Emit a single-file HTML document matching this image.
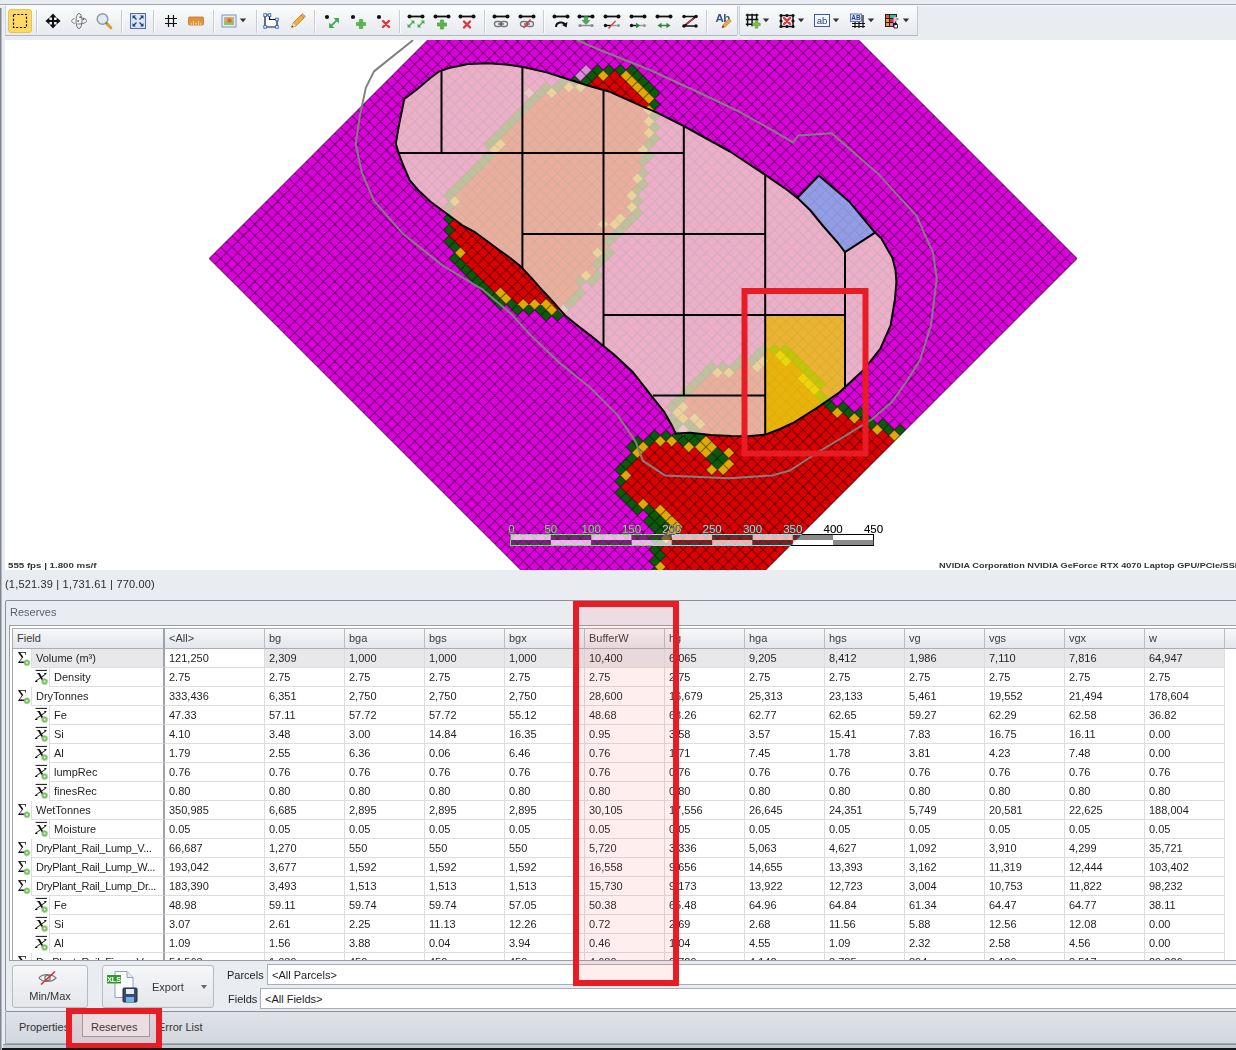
<!DOCTYPE html>
<html><head><meta charset="utf-8"><title>Reserves</title>
<style>
html,body{margin:0;padding:0;}
body{width:1236px;height:1050px;overflow:hidden;background:#e9ecf1;font-family:"Liberation Sans",sans-serif;font-size:11px;color:#1e1e1e;}
#root{position:relative;width:1236px;height:1050px;overflow:hidden;background:#e9ecf1;}
.abs{position:absolute;}
#topline{position:absolute;left:0;top:4px;width:1236px;height:1px;background:#a4a8b0;}
#topline2{position:absolute;left:0;top:5px;width:1236px;height:1px;background:#f4f6f9;}
#leftedge{position:absolute;left:0;top:8px;width:1px;height:1042px;background:#80848c;}
#leftedge2{position:absolute;left:1px;top:8px;width:1px;height:1042px;background:#b4b8c0;}
#tb{position:absolute;left:5px;top:6px;width:911px;height:29px;background:linear-gradient(#fbfcfd,#e6e9ee);border-bottom:1px solid #b4b8c0;border-right:1px solid #c4c8d0;border-left:1px solid #d0d3da;box-sizing:content-box;}
#tb svg{position:absolute;left:-6px;top:-6px;}
#coords{position:absolute;left:5px;top:578px;font-size:11px;color:#2a2a2a;letter-spacing:0.18px;}
#grp{position:absolute;left:5px;top:600px;width:1240px;height:412px;border:1px solid #8c9097;border-radius:2px;box-sizing:border-box;background:#e9ecf1;}
#grptitle{position:absolute;left:10px;top:606px;color:#5a5f6b;font-size:11px;}
#gridbox{position:absolute;left:9px;top:625px;width:1240px;height:336px;border:1px solid #9a9ea6;background:#fff;box-sizing:border-box;}
#grid{position:absolute;left:12px;top:628px;width:1224px;height:332px;overflow:hidden;background:#fff;border-top:1px solid #a8acb4;border-left:1px solid #a8acb4;box-sizing:border-box;}
.hd{position:absolute;top:0;height:20px;background:linear-gradient(#f7f8fa,#e3e6eb);border-right:1px solid #b9bdc5;border-bottom:1px solid #a9adb5;box-sizing:border-box;color:#3a3a3a;padding:3px 0 0 4px;white-space:nowrap;}
.c{position:absolute;height:19px;border-right:1px solid #dcdde0;border-bottom:1px solid #dcdde0;box-sizing:border-box;padding:3px 0 0 4px;white-space:nowrap;overflow:hidden;}
.sel{background:#e8e8eb;}
.ico{position:absolute;}
#bottomdark{position:absolute;left:0;top:1048px;width:1236px;height:2px;background:#161616;}
.btn{position:absolute;border:1px solid #b7bac1;border-radius:3px;background:linear-gradient(#f6f7f9,#e4e6ea);box-sizing:border-box;}
.inp{position:absolute;height:21px;border:1px solid #a9adb5;background:#fff;box-sizing:border-box;padding:3px 0 0 4px;white-space:nowrap;}
.tab{position:absolute;top:1021px;color:#333;}

</style></head><body>
<div id="root">
<div id="tb"><svg width="930" height="40" viewBox="0 0 930 40"><path d="M36.5 10V33" stroke="#c9ccd3" stroke-width="1"/><path d="M37.5 10V33" stroke="#fbfcfd" stroke-width="1"/><path d="M121.5 10V33" stroke="#c9ccd3" stroke-width="1"/><path d="M122.5 10V33" stroke="#fbfcfd" stroke-width="1"/><path d="M153.5 10V33" stroke="#c9ccd3" stroke-width="1"/><path d="M154.5 10V33" stroke="#fbfcfd" stroke-width="1"/><path d="M213.5 10V33" stroke="#c9ccd3" stroke-width="1"/><path d="M214.5 10V33" stroke="#fbfcfd" stroke-width="1"/><path d="M256.5 10V33" stroke="#c9ccd3" stroke-width="1"/><path d="M257.5 10V33" stroke="#fbfcfd" stroke-width="1"/><path d="M314.5 10V33" stroke="#c9ccd3" stroke-width="1"/><path d="M315.5 10V33" stroke="#fbfcfd" stroke-width="1"/><path d="M399.5 10V33" stroke="#c9ccd3" stroke-width="1"/><path d="M400.5 10V33" stroke="#fbfcfd" stroke-width="1"/><path d="M484.5 10V33" stroke="#c9ccd3" stroke-width="1"/><path d="M485.5 10V33" stroke="#fbfcfd" stroke-width="1"/><path d="M543.5 10V33" stroke="#c9ccd3" stroke-width="1"/><path d="M544.5 10V33" stroke="#fbfcfd" stroke-width="1"/><path d="M706.5 10V33" stroke="#c9ccd3" stroke-width="1"/><path d="M707.5 10V33" stroke="#fbfcfd" stroke-width="1"/><rect x="737" y="6" width="3" height="30" fill="#e9ecf1"/><path d="M737.5 6V35" stroke="#c4c8d0"/><path d="M739.5 6V35" stroke="#d0d3da"/><rect x="8.5" y="9.5" width="23" height="23" rx="2.5" fill="#ffd966" stroke="#e3c263"/><rect x="13.5" y="14.5" width="13" height="13" fill="none" stroke="#111" stroke-width="1.2" stroke-dasharray="2.2 1.6"/><g transform="translate(53,21)" fill="#111"><path d="M-5 0H5M0 -5V5" stroke="#111" stroke-width="2"/><path d="M0 -7.6L-3.6 -3.6H3.6ZM0 7.6L-3.6 3.6H3.6ZM-7.6 0L-3.6 -3.6V3.6ZM7.6 0L3.6 -3.6V3.6Z"/></g><g transform="translate(79,21)" fill="none" stroke="#666" stroke-width="0.9"><ellipse cx="0" cy="0" rx="3" ry="7.6"/><path d="M-4.6 -2.6C-8.6 -1.2 -8 1.8 -4.2 2.4M-1.6 3C3.5 3.2 8 1.6 7.6 -0.4C7.3 -1.8 5.4 -2.6 3.6 -2.9"/><path d="M1.2 -4.6V-3M0.4 -3.8H2M4.4 -2.6V-1M3.6 -1.8H5.2M-0.8 -0.8V0.8M-1.6 0H0" stroke="#444" stroke-width="0.8"/></g><g transform="translate(104,21)"><circle cx="-1.5" cy="-2" r="5.3" fill="#dfeaf6" stroke="#8d99a8" stroke-width="1.5"/><path d="M2.8 2.6L6.8 6.8" stroke="#e0a030" stroke-width="3" stroke-linecap="round"/><path d="M1.6 1.4L3 2.8" stroke="#777" stroke-width="1.8"/></g><g transform="translate(138,21)"><rect x="-7.5" y="-7.5" width="15" height="15" fill="#dbe6f5" stroke="#4a6ea8" stroke-width="1"/><path d="M-5.5 -5.5H-2L-5.5 -2ZM5.5 -5.5H2L5.5 -2ZM-5.5 5.5H-2L-5.5 2ZM5.5 5.5H2L5.5 2Z" fill="#1f3f7a"/><path d="M-4.5 -4.5L-1.5 -1.5M4.5 -4.5L1.5 -1.5M-4.5 4.5L-1.5 1.5M4.5 4.5L1.5 1.5" stroke="#1f3f7a" stroke-width="1.3"/></g><g transform="translate(171,21)" stroke="#111" stroke-width="1.2"><path d="M-2.5 -6V6M2.5 -6V6M-6 -2.5H6M-6 2.5H6"/></g><g transform="translate(196,21)"><rect x="-7.5" y="-4" width="15" height="8" rx="1" fill="#e2913a" stroke="#c9772a" stroke-width="0.8"/><path d="M-5 4V1.5M-2.5 4V0M0 4V1.5M2.5 4V0M5 4V1.5" stroke="#f7dcc0" stroke-width="0.9"/></g><g transform="translate(229,21)"><rect x="-7" y="-6" width="14" height="12" fill="#e9eef6" stroke="#7a93c2" stroke-width="1"/><rect x="-5" y="-4" width="10" height="8" fill="#8fc46a"/><rect x="-5" y="-4" width="10" height="4" fill="#c9b07a"/><circle cx="0.5" cy="-0.5" r="2.2" fill="#e0662a"/></g><path d="M239.8 18.6H246.2L243 22.2Z" fill="#333"/><g transform="translate(271,21)"><path d="M-6 -6H-1.5V-1.5H6V6H-6Z" fill="#fff" stroke="#111" stroke-width="1.2"/><g fill="#fff" stroke="#2a5fd0" stroke-width="0.9"><rect x="-7.2" y="-7.2" width="2.6" height="2.6"/><rect x="-2.8" y="-7.2" width="2.6" height="2.6"/><rect x="4.6" y="-2.8" width="2.6" height="2.6"/><rect x="4.6" y="4.6" width="2.6" height="2.6"/><rect x="-7.2" y="4.6" width="2.6" height="2.6"/></g></g><g transform="translate(298,21)"><path d="M-6.5 6.5L-5 2L3 -6L6 -3L-2 5Z" fill="#f0b040" stroke="#b8801e" stroke-width="0.8"/><path d="M3 -6L4.5 -7.5L7.5 -4.5L6 -3Z" fill="#e8a0a0" stroke="#b8801e" stroke-width="0.6"/><path d="M-6.5 6.5L-5 2L-2 5Z" fill="#f7e2c0"/><path d="M-6.5 6.5L-5.8 4.4L-4.4 5.8Z" fill="#333"/></g><circle cx="327" cy="17" r="2.1" fill="#111"/><g transform="translate(334,23) scale(0.9)" fill="#45ab52" stroke="#45ab52"><path d="M-3.5 3.5L3.5 -3.5" stroke-width="2.2"/><path d="M5.5 -5.5H-0.5L5.5 0.5Z" stroke="none"/><path d="M-5.5 5.5H0.5L-5.5 -0.5Z" stroke="none"/></g><circle cx="353" cy="17" r="2.1" fill="#111"/><g transform="translate(361,24)"><path d="M-1.6 -4.5H1.6V-1.6H4.5V1.6H1.6V4.5H-1.6V1.6H-4.5V-1.6H-1.6Z" fill="#5cb548" stroke="#3f9a30" stroke-width="0.6"/></g><circle cx="379" cy="17" r="2.1" fill="#111"/><g transform="translate(386,24)" stroke="#e0363a" stroke-width="2.4" stroke-linecap="round"><path d="M-3 -3L3 3M3 -3L-3 3"/></g><path d="M409.5 16.5H422.5" stroke="#111" stroke-width="1.8"/><circle cx="409.5" cy="16.5" r="2" fill="#111"/><circle cx="422.5" cy="16.5" r="2" fill="#111"/><g transform="translate(411,24) scale(0.62)" fill="#45ab52" stroke="#45ab52"><path d="M-3.5 3.5L3.5 -3.5" stroke-width="2.2"/><path d="M5.5 -5.5H-0.5L5.5 0.5Z" stroke="none"/><path d="M-5.5 5.5H0.5L-5.5 -0.5Z" stroke="none"/></g><g transform="translate(421,24) scale(0.62)" fill="#45ab52" stroke="#45ab52"><path d="M-3.5 3.5L3.5 -3.5" stroke-width="2.2"/><path d="M5.5 -5.5H-0.5L5.5 0.5Z" stroke="none"/><path d="M-5.5 5.5H0.5L-5.5 -0.5Z" stroke="none"/></g><path d="M435.5 16.5H448.5" stroke="#111" stroke-width="1.8"/><circle cx="435.5" cy="16.5" r="2" fill="#111"/><circle cx="448.5" cy="16.5" r="2" fill="#111"/><g transform="translate(442,24.5)"><path d="M-1.6 -4.5H1.6V-1.6H4.5V1.6H1.6V4.5H-1.6V1.6H-4.5V-1.6H-1.6Z" fill="#5cb548" stroke="#3f9a30" stroke-width="0.6"/></g><path d="M460.5 16.5H473.5" stroke="#111" stroke-width="1.8"/><circle cx="460.5" cy="16.5" r="2" fill="#111"/><circle cx="473.5" cy="16.5" r="2" fill="#111"/><g transform="translate(467,24.5)" stroke="#e0363a" stroke-width="2.4" stroke-linecap="round"><path d="M-3 -3L3 3M3 -3L-3 3"/></g><path d="M494.5 16.5H507.5" stroke="#111" stroke-width="1.8"/><circle cx="494.5" cy="16.5" r="2" fill="#111"/><circle cx="507.5" cy="16.5" r="2" fill="#111"/><g fill="none" stroke="#777" stroke-width="1.3"><rect x="494.5" y="21.5" width="7" height="5" rx="2.5"/><rect x="500.5" y="21.5" width="7" height="5" rx="2.5"/></g><path d="M498 24H504" stroke="#555" stroke-width="1.2"/><path d="M520.5 16.5H533.5" stroke="#111" stroke-width="1.8"/><circle cx="520.5" cy="16.5" r="2" fill="#111"/><circle cx="533.5" cy="16.5" r="2" fill="#111"/><g fill="none" stroke="#777" stroke-width="1.3"><rect x="520.5" y="21.5" width="7" height="5" rx="2.5"/><rect x="526.5" y="21.5" width="7" height="5" rx="2.5"/></g><path d="M524 24H530" stroke="#555" stroke-width="1.2"/><path d="M523.5 28L530.5 19.5" stroke="#e0363a" stroke-width="1.3"/><path d="M554.5 16.5H567.5" stroke="#111" stroke-width="1.8"/><circle cx="554.5" cy="16.5" r="2" fill="#111"/><circle cx="567.5" cy="16.5" r="2" fill="#111"/><path d="M556 27C556 22 563 21 565.5 24.5" fill="none" stroke="#111" stroke-width="2"/><path d="M567.5 22L566.5 27.5L562 25Z" fill="#111"/><path d="M579.5 16.5H592.5" stroke="#111" stroke-width="1.8"/><circle cx="579.5" cy="16.5" r="2" fill="#111"/><circle cx="592.5" cy="16.5" r="2" fill="#111"/><path d="M584.3 16.5H587.7V20.5H590L586 24.5L582 20.5H584.3Z" fill="#45ab52" stroke="#2e8a3a" stroke-width="0.5"/><path d="M580 25.5H592" stroke="#888" stroke-width="1.4"/><circle cx="580" cy="25.5" r="1.6" fill="#888"/><circle cx="592" cy="25.5" r="1.6" fill="#888"/><path d="M605.5 16.5H618.5" stroke="#111" stroke-width="1.8"/><circle cx="605.5" cy="16.5" r="2" fill="#111"/><circle cx="618.5" cy="16.5" r="2" fill="#111"/><path d="M605.5 25.5H611" stroke="#111" stroke-width="1.4"/><circle cx="605.5" cy="25.5" r="1.7" fill="#111"/><path d="M612 25.5H618" stroke="#999" stroke-width="1.4"/><circle cx="618.5" cy="25.5" r="1.6" fill="#999"/><path d="M608.5 28.5L615.5 21" stroke="#e0363a" stroke-width="1.3"/><path d="M631.5 16.5H644.5" stroke="#111" stroke-width="1.8"/><circle cx="631.5" cy="16.5" r="2" fill="#111"/><circle cx="644.5" cy="16.5" r="2" fill="#111"/><path d="M631.5 25.5H638" stroke="#111" stroke-width="1.4"/><circle cx="631.5" cy="25.5" r="1.7" fill="#111"/><path d="M636 22.8L640.5 25.5L636 28.2Z" fill="#2e8a3a"/><path d="M640 25.5H644" stroke="#999" stroke-width="1.4"/><circle cx="644.5" cy="25.5" r="1.6" fill="#999"/><path d="M657.5 16.5H670.5" stroke="#111" stroke-width="1.8"/><circle cx="657.5" cy="16.5" r="2" fill="#111"/><circle cx="670.5" cy="16.5" r="2" fill="#111"/><path d="M660 25.5H668" stroke="#2e8a3a" stroke-width="1.5"/><path d="M657.5 25.5L661.5 22.8V28.2ZM670.5 25.5L666.5 22.8V28.2Z" fill="#2e8a3a"/><path d="M684 16.5H696L684 26H696" fill="none" stroke="#111" stroke-width="1.6"/><circle cx="684" cy="16.5" r="1.7" fill="#111"/><circle cx="696" cy="16.5" r="1.7" fill="#111"/><circle cx="684" cy="26" r="1.7" fill="#111"/><circle cx="696" cy="26" r="1.7" fill="#111"/><path d="M686 24L694 18.5" stroke="#e0363a" stroke-width="1.3"/><text x="715.5" y="22" font-family="Liberation Sans, sans-serif" font-size="11.5" font-weight="bold" fill="#354f8c" letter-spacing="-0.6">Ab</text><path d="M722 27.8L723.2 24.6L729 18.8L731.2 21L725.4 26.8Z" fill="#f0a838" stroke="#b8801e" stroke-width="0.7"/><path d="M722 27.8L722.8 25.6L724.2 27Z" fill="#223"/><g stroke="#111" stroke-width="1.5"><path d="M747.6 13.8V26.2M752.1 13.8V26.2M756.6 13.8V24M745.8 15H758.4M745.8 19.5H758.4M745.8 24.2H756"/></g><g transform="translate(756.5,24.3) scale(0.85)"><path d="M-1.6 -4.5H1.6V-1.6H4.5V1.6H1.6V4.5H-1.6V1.6H-4.5V-1.6H-1.6Z" fill="#76bd45" stroke="#5aa532" stroke-width="0.6"/></g><path d="M762.8 18.6H769.2L766 22.2Z" fill="#333"/><g transform="translate(787,21)"><rect x="-6" y="-5.5" width="12" height="11" fill="none" stroke="#111" stroke-width="1.4"/><g fill="#111"><circle cx="-6" cy="-5.5" r="1.6"/><circle cx="0" cy="-5.5" r="1.6"/><circle cx="6" cy="-5.5" r="1.6"/><circle cx="-6" cy="0" r="1.6"/><circle cx="6" cy="0" r="1.6"/><circle cx="-6" cy="5.5" r="1.6"/><circle cx="0" cy="5.5" r="1.6"/><circle cx="6" cy="5.5" r="1.6"/></g></g><g transform="translate(787,21)" stroke="#e0363a" stroke-width="2.4" stroke-linecap="round"><path d="M-3 -3L3 3M3 -3L-3 3"/></g><path d="M797.8 18.6H804.2L801 22.2Z" fill="#333"/><rect x="814.5" y="14.5" width="15" height="12" fill="#f4f7fc" stroke="#3a5aa8" stroke-width="1"/><text x="822" y="24" font-family="Liberation Sans, sans-serif" font-size="9.5" fill="#1f3f8a" text-anchor="middle">ab</text><path d="M832.8 18.6H839.2L836 22.2Z" fill="#333"/><rect x="850.5" y="14" width="11" height="7.5" fill="#dfe8f6" stroke="#3a5aa8" stroke-width="0.8"/><text x="856" y="20.3" font-family="Liberation Sans, sans-serif" font-size="6.5" font-weight="bold" fill="#1f3f8a" text-anchor="middle">AB</text><g stroke="#111" stroke-width="1.2"><path d="M855 22V28M859 22V28M863 15V28M852 23.5H865M852 26.5H865"/></g><path d="M867.8 18.6H874.2L871 22.2Z" fill="#333"/><g><rect x="885" y="14" width="12" height="13" fill="#222"/><rect x="886" y="15" width="3" height="3" fill="#f05050"/><rect x="890" y="15" width="6" height="3" fill="#30c0a0"/><rect x="886" y="19" width="3" height="3" fill="#f0a030"/><rect x="890" y="19" width="6" height="3" fill="#e03030"/><rect x="886" y="23" width="3" height="3" fill="#f0a030"/><rect x="890" y="23" width="3" height="3" fill="#e080e0"/><rect x="893.5" y="17" width="3.5" height="6" fill="#f0b0e0"/><path d="M895.5 21.5V24.5M894 24.5H897.5V28H894Z" fill="#fff" stroke="#111" stroke-width="0.9"/><circle cx="897.5" cy="19" r="1" fill="#30b030"/></g><path d="M902.8 18.6H909.2L906 22.2Z" fill="#333"/></svg></div>
<svg id="map" width="1231" height="530" viewBox="5 40 1231 530" style="position:absolute;left:5px;top:40px;background:#fff">
<defs><mask id="pm" maskUnits="userSpaceOnUse" x="0" y="0" width="1236" height="600"><polygon points="395.8,143.8 398.8,125.9 404.3,99 416.8,89.5 430,78.2 438.7,71.6 448.9,68 467.9,64.1 488.3,63.2 505.7,64.4 523.2,67 546.5,72.4 569.8,79.7 590.2,86.2 610,91.8 640,105.4 657,112.7 683.8,126 730,151.5 765,174.6 785,188.3 797.4,197.9 797.4,197.9 818.8,175.5 849.8,202.1 875,232.6 881.2,238.3 892.5,258 895.5,270 896.4,282 895,299 890.6,325.3 880.4,348.6 863,370.5 839.6,392.3 816.3,408.4 793,423 780,429 765.4,434.6 748,436.3 731,436.1 710.7,435 690.3,432.8 675.7,433.5 671.4,424.8 664,411.6 654.6,400 632.8,372 613.4,354.1 601.8,344.7 590.9,335.9 577.8,325.7 566.1,316.3 558.8,308.3 553,301.7 542.8,290.8 531.2,277.7 520.2,266 509.3,257.3 499.1,250 475,232.2 462.3,225.3 446.8,213.8 430.6,201.8 418.5,190.5 409.8,180.4 403.5,166 398.8,153.5" fill="#fff"/><polygon points="765.4,315.1 844.6,315.1 844.6,389 839.6,392.3 816.3,408.4 793,423 780,429 765.4,434.6" fill="#000"/><polygon points="797.4,197.9 818.8,175.5 849.8,202.1 875,232.6 845,252.1 838,243 823.1,226 810,210" fill="#000"/></mask></defs>
<g transform="matrix(5.71,5.71,5.71,-5.71,209.2,258.5)">
<rect x="0" y="0" width="76" height="76" fill="#dc00dc"/>
<path fill="#dc0000" d="M75 3h1v1h-1zM74 4h2v1h-2zM73 5h3v1h-3zM72 6h4v1h-4zM71 7h5v1h-5zM70 8h6v1h-6zM69 9h7v1h-7zM68 10h8v1h-8zM67 11h9v1h-9zM67 12h9v1h-9zM66 13h10v1h-10zM65 14h11v1h-11zM65 15h11v1h-11zM56 16h3v1h-3zM65 16h11v1h-11zM56 17h5v1h-5zM65 17h11v1h-11zM55 18h21v1h-21zM55 19h21v1h-21zM55 20h21v1h-21zM55 21h21v1h-21zM22 22h6v1h-6zM55 22h21v1h-21zM19 23h12v1h-12zM56 23h20v1h-20zM18 24h14v1h-14zM57 24h19v1h-19zM17 25h16v1h-16zM59 25h3v1h-3zM63 25h13v1h-13zM17 26h18v1h-18zM64 26h12v1h-12zM16 27h19v1h-19zM64 27h12v1h-12zM16 28h19v1h-19zM55 28h1v1h-1zM58 28h4v1h-4zM63 28h13v1h-13zM16 29h19v1h-19zM54 29h22v1h-22zM16 30h18v1h-18zM54 30h22v1h-22zM16 31h18v1h-18zM54 31h22v1h-22zM16 32h19v1h-19zM54 32h22v1h-22zM16 33h18v1h-18zM54 33h22v1h-22zM16 34h17v1h-17zM55 34h21v1h-21zM16 35h18v1h-18zM56 35h20v1h-20zM15 36h18v1h-18zM56 36h20v1h-20zM15 37h16v1h-16zM32 37h1v1h-1zM56 37h20v1h-20zM15 38h17v1h-17zM58 38h18v1h-18zM15 39h17v1h-17zM58 39h18v1h-18zM15 40h18v1h-18zM57 40h19v1h-19zM15 41h17v1h-17zM60 41h2v1h-2zM69 41h7v1h-7zM15 42h16v1h-16zM71 42h5v1h-5zM15 43h16v1h-16zM74 43h2v1h-2zM16 44h14v1h-14zM16 45h14v1h-14zM17 46h12v1h-12zM18 47h10v1h-10zM18 48h10v1h-10zM18 49h9v1h-9zM19 50h7v1h-7zM19 51h6v1h-6z"/>
<path fill="#0a5a0a" d="M75 2h1v1h-1zM74 3h1v1h-1zM73 4h1v1h-1zM72 5h1v1h-1zM71 6h1v1h-1zM70 7h1v1h-1zM69 8h1v1h-1zM68 9h1v1h-1zM67 10h1v1h-1zM66 11h1v1h-1zM65 12h1v1h-1zM64 13h2v1h-2zM63 14h2v1h-2zM56 15h4v1h-4zM61 15h3v1h-3zM55 16h1v1h-1zM60 16h4v1h-4zM54 17h1v1h-1zM54 18h1v1h-1zM54 19h1v1h-1zM53 20h1v1h-1zM21 21h9v1h-9zM53 21h1v1h-1zM19 22h2v1h-2zM30 22h2v1h-2zM54 22h1v1h-1zM18 23h1v1h-1zM32 23h1v1h-1zM54 23h1v1h-1zM17 24h1v1h-1zM33 24h2v1h-2zM55 24h1v1h-1zM16 25h1v1h-1zM35 25h1v1h-1zM56 25h2v1h-2zM15 26h1v1h-1zM54 26h2v1h-2zM57 26h2v1h-2zM61 26h2v1h-2zM15 27h1v1h-1zM35 27h1v1h-1zM53 27h1v1h-1zM56 27h3v1h-3zM61 27h2v1h-2zM15 28h1v1h-1zM35 28h1v1h-1zM53 28h1v1h-1zM15 29h1v1h-1zM35 29h1v1h-1zM53 29h1v1h-1zM15 30h1v1h-1zM34 30h1v1h-1zM53 30h1v1h-1zM15 31h1v1h-1zM35 31h1v1h-1zM53 31h1v1h-1zM15 32h1v1h-1zM35 32h1v1h-1zM53 32h1v1h-1zM15 33h1v1h-1zM34 33h1v1h-1zM53 33h1v1h-1zM14 34h1v1h-1zM34 34h1v1h-1zM53 34h1v1h-1zM14 35h1v1h-1zM34 35h1v1h-1zM54 35h1v1h-1zM14 36h1v1h-1zM33 36h1v1h-1zM55 36h1v1h-1zM14 37h1v1h-1zM33 37h1v1h-1zM55 37h1v1h-1zM14 38h1v1h-1zM33 38h1v1h-1zM56 38h1v1h-1zM14 39h1v1h-1zM33 39h1v1h-1zM56 39h1v1h-1zM14 40h1v1h-1zM33 40h1v1h-1zM56 40h1v1h-1zM14 41h1v1h-1zM33 41h1v1h-1zM57 41h1v1h-1zM65 41h3v1h-3zM14 42h1v1h-1zM32 42h1v1h-1zM58 42h7v1h-7zM68 42h2v1h-2zM14 43h1v1h-1zM31 43h1v1h-1zM70 43h3v1h-3zM14 44h1v1h-1zM31 44h1v1h-1zM73 44h2v1h-2zM15 45h1v1h-1zM30 45h1v1h-1zM75 45h1v1h-1zM15 46h1v1h-1zM29 46h1v1h-1zM16 47h1v1h-1zM29 47h1v1h-1zM17 48h1v1h-1zM28 48h1v1h-1zM17 49h1v1h-1zM28 49h1v1h-1zM17 50h1v1h-1zM27 50h1v1h-1zM18 51h1v1h-1zM26 51h1v1h-1zM19 52h1v1h-1zM25 52h1v1h-1zM20 53h5v1h-5z"/>
<path fill="#e1aa00" d="M66 12h1v1h-1zM64 15h1v1h-1zM59 16h1v1h-1zM64 16h1v1h-1zM55 17h1v1h-1zM61 17h4v1h-4zM54 20h1v1h-1zM54 21h1v1h-1zM21 22h1v1h-1zM28 22h2v1h-2zM31 23h1v1h-1zM55 23h1v1h-1zM32 24h1v1h-1zM56 24h1v1h-1zM33 25h2v1h-2zM58 25h1v1h-1zM62 25h1v1h-1zM16 26h1v1h-1zM59 26h2v1h-2zM63 26h1v1h-1zM54 27h2v1h-2zM59 27h2v1h-2zM63 27h1v1h-1zM54 28h1v1h-1zM56 28h2v1h-2zM62 28h1v1h-1zM34 31h1v1h-1zM15 34h1v1h-1zM33 34h1v1h-1zM54 34h1v1h-1zM15 35h1v1h-1zM55 35h1v1h-1zM31 37h1v1h-1zM32 38h1v1h-1zM57 38h1v1h-1zM32 39h1v1h-1zM57 39h1v1h-1zM32 41h1v1h-1zM58 41h2v1h-2zM62 41h3v1h-3zM68 41h1v1h-1zM31 42h1v1h-1zM70 42h1v1h-1zM73 43h1v1h-1zM15 44h1v1h-1zM30 44h1v1h-1zM75 44h1v1h-1zM16 46h1v1h-1zM17 47h1v1h-1zM28 47h1v1h-1zM27 49h1v1h-1zM18 50h1v1h-1zM26 50h1v1h-1zM25 51h1v1h-1zM20 52h5v1h-5z"/>
<path fill="#d98ad9" d="M35 26h1v1h-1zM56 26h1v1h-1zM13 42h1v1h-1zM16 48h1v1h-1zM16 49h1v1h-1z"/>
<path d="M0 0V76M0 0H76M1 0V76M0 1H76M2 0V76M0 2H76M3 0V76M0 3H76M4 0V76M0 4H76M5 0V76M0 5H76M6 0V76M0 6H76M7 0V76M0 7H76M8 0V76M0 8H76M9 0V76M0 9H76M10 0V76M0 10H76M11 0V76M0 11H76M12 0V76M0 12H76M13 0V76M0 13H76M14 0V76M0 14H76M15 0V76M0 15H76M16 0V76M0 16H76M17 0V76M0 17H76M18 0V76M0 18H76M19 0V76M0 19H76M20 0V76M0 20H76M21 0V76M0 21H76M22 0V76M0 22H76M23 0V76M0 23H76M24 0V76M0 24H76M25 0V76M0 25H76M26 0V76M0 26H76M27 0V76M0 27H76M28 0V76M0 28H76M29 0V76M0 29H76M30 0V76M0 30H76M31 0V76M0 31H76M32 0V76M0 32H76M33 0V76M0 33H76M34 0V76M0 34H76M35 0V76M0 35H76M36 0V76M0 36H76M37 0V76M0 37H76M38 0V76M0 38H76M39 0V76M0 39H76M40 0V76M0 40H76M41 0V76M0 41H76M42 0V76M0 42H76M43 0V76M0 43H76M44 0V76M0 44H76M45 0V76M0 45H76M46 0V76M0 46H76M47 0V76M0 47H76M48 0V76M0 48H76M49 0V76M0 49H76M50 0V76M0 50H76M51 0V76M0 51H76M52 0V76M0 52H76M53 0V76M0 53H76M54 0V76M0 54H76M55 0V76M0 55H76M56 0V76M0 56H76M57 0V76M0 57H76M58 0V76M0 58H76M59 0V76M0 59H76M60 0V76M0 60H76M61 0V76M0 61H76M62 0V76M0 62H76M63 0V76M0 63H76M64 0V76M0 64H76M65 0V76M0 65H76M66 0V76M0 66H76M67 0V76M0 67H76M68 0V76M0 68H76M69 0V76M0 69H76M70 0V76M0 70H76M71 0V76M0 71H76M72 0V76M0 72H76M73 0V76M0 73H76M74 0V76M0 74H76M75 0V76M0 75H76M76 0V76M0 76H76" fill="none" stroke="#000" stroke-opacity="0.48" stroke-width="0.135"/>
</g>
<polygon points="395.8,143.8 398.8,125.9 404.3,99 416.8,89.5 430,78.2 438.7,71.6 448.9,68 467.9,64.1 488.3,63.2 505.7,64.4 523.2,67 546.5,72.4 569.8,79.7 590.2,86.2 610,91.8 640,105.4 657,112.7 683.8,126 730,151.5 765,174.6 785,188.3 797.4,197.9 797.4,197.9 818.8,175.5 849.8,202.1 875,232.6 881.2,238.3 892.5,258 895.5,270 896.4,282 895,299 890.6,325.3 880.4,348.6 863,370.5 839.6,392.3 816.3,408.4 793,423 780,429 765.4,434.6 748,436.3 731,436.1 710.7,435 690.3,432.8 675.7,433.5 671.4,424.8 664,411.6 654.6,400 632.8,372 613.4,354.1 601.8,344.7 590.9,335.9 577.8,325.7 566.1,316.3 558.8,308.3 553,301.7 542.8,290.8 531.2,277.7 520.2,266 509.3,257.3 499.1,250 475,232.2 462.3,225.3 446.8,213.8 430.6,201.8 418.5,190.5 409.8,180.4 403.5,166 398.8,153.5" fill="#f0ddc6" fill-opacity="0.79" mask="url(#pm)"/>
<polygon points="797.4,197.9 818.8,175.5 849.8,202.1 875,232.6 845,252.1 838,243 823.1,226 810,210" fill="#83c4e9" fill-opacity="0.79"/>
<polygon points="765.4,315.1 844.6,315.1 844.6,389 839.6,392.3 816.3,408.4 793,423 780,429 765.4,434.6" fill="#f0de0f" fill-opacity="0.8"/>
<polyline points="413.2,40 374,71.4 365.9,87.6 359.8,115.9 355.7,144.2 361.8,172.5 374,200.9 402.3,233.2 442.7,265.6 483.2,289.9 511.5,314.1 529.7,334.4 560,363.2 589,386.5 618,415.6 635.7,441.9 643,460.8 664.9,475.4 700,477 729,478.3 772.6,475.4 790,470.5 819.1,451.5 848.2,434 871.5,419.5 891.9,402 906.5,381.6 913.8,370 920,360.3 931,325 936.8,278.5 933,252.7 916.5,215.8 877.8,173.4 831.7,133.2 798.5,135.4 793,142.7 780,134.6 740,112 700,93 650,70 600,50 577,40" fill="none" stroke="#808080" stroke-width="2" stroke-linejoin="round"/>
<g fill="none" stroke="#000" stroke-width="2" stroke-linejoin="round">
<polygon points="395.8,143.8 398.8,125.9 404.3,99 416.8,89.5 430,78.2 438.7,71.6 448.9,68 467.9,64.1 488.3,63.2 505.7,64.4 523.2,67 546.5,72.4 569.8,79.7 590.2,86.2 610,91.8 640,105.4 657,112.7 683.8,126 730,151.5 765,174.6 785,188.3 797.4,197.9 797.4,197.9 818.8,175.5 849.8,202.1 875,232.6 881.2,238.3 892.5,258 895.5,270 896.4,282 895,299 890.6,325.3 880.4,348.6 863,370.5 839.6,392.3 816.3,408.4 793,423 780,429 765.4,434.6 748,436.3 731,436.1 710.7,435 690.3,432.8 675.7,433.5 671.4,424.8 664,411.6 654.6,400 632.8,372 613.4,354.1 601.8,344.7 590.9,335.9 577.8,325.7 566.1,316.3 558.8,308.3 553,301.7 542.8,290.8 531.2,277.7 520.2,266 509.3,257.3 499.1,250 475,232.2 462.3,225.3 446.8,213.8 430.6,201.8 418.5,190.5 409.8,180.4 403.5,166 398.8,153.5"/>
<polyline points="797.4,197.9 810,210 823.1,226 838,243 845,252.1 875,232.6"/>
<path d="M441.5 71V153.1M397.5 153.1H683.8M522.4 67V268.5M603.5 90.5V346M683.8 126V395.5M522.4 234H765.2M765.2 174.6V434.6M845 252.1V389M603.5 315.1H845M653 395.5H765.2"/>
</g>
<rect x="744.5" y="291" width="121" height="162.5" fill="none" stroke="#e81c24" stroke-width="6"/>
<g>
<g fill="#fff" fill-opacity="0.7"><rect x="510.5" y="535" width="40.33" height="5"/><rect x="550.8" y="540" width="40.33" height="5"/><rect x="591.2" y="535" width="40.33" height="5"/><rect x="631.5" y="540" width="40.33" height="5"/><rect x="671.8" y="535" width="40.33" height="5"/><rect x="712.1" y="540" width="40.33" height="5"/><rect x="752.5" y="535" width="40.33" height="5"/><rect x="792.8" y="540" width="40.33" height="5"/><rect x="833.1" y="535" width="40.33" height="5"/></g>
<g fill="#3c3c3c" fill-opacity="0.6"><rect x="510.5" y="540" width="40.33" height="5"/><rect x="550.8" y="535" width="40.33" height="5"/><rect x="591.2" y="540" width="40.33" height="5"/><rect x="631.5" y="535" width="40.33" height="5"/><rect x="671.8" y="540" width="40.33" height="5"/><rect x="712.1" y="535" width="40.33" height="5"/><rect x="752.5" y="540" width="40.33" height="5"/><rect x="792.8" y="535" width="40.33" height="5"/><rect x="833.1" y="540" width="40.33" height="5"/></g>
<g style="mix-blend-mode:difference"><rect x="510.5" y="534.5" width="363" height="11" fill="none" stroke="#fff" stroke-width="1"/>
<g fill="#fff" font-family="Liberation Sans, sans-serif" font-size="11.5" text-anchor="middle">
<text x="511.5" y="533">0</text><text x="550.8" y="533">50</text><text x="591.2" y="533">100</text><text x="631.5" y="533">150</text><text x="671.8" y="533">200</text><text x="712.1" y="533">250</text><text x="752.5" y="533">300</text><text x="792.8" y="533">350</text><text x="833.1" y="533">400</text><text x="873.5" y="533">450</text>
</g></g>
</g>
<text x="8" y="568" font-family="Liberation Sans, sans-serif" font-size="8" font-weight="bold" fill="#333" textLength="88.5" lengthAdjust="spacingAndGlyphs">555 fps | 1.800 ms/f</text>
<text x="939" y="568" font-family="Liberation Sans, sans-serif" font-size="8" font-weight="bold" fill="#333" textLength="307" lengthAdjust="spacingAndGlyphs">NVIDIA Corporation NVIDIA GeForce RTX 4070 Laptop GPU/PCIe/SSE2</text>
</svg>
<div id="coords">(1,521.39 | 1,731.61 | 770.00)</div>
<div id="grp"></div><div id="grptitle">Reserves</div>
<div id="gridbox"></div>
<div id="grid"><div class="hd" style="left:0px;width:152px;border-right:2px solid #9ea2aa;">Field</div><div class="hd" style="left:152px;width:100px;">&lt;All&gt;</div><div class="hd" style="left:252px;width:80px;">bg</div><div class="hd" style="left:332px;width:80px;">bga</div><div class="hd" style="left:412px;width:80px;">bgs</div><div class="hd" style="left:492px;width:80px;">bgx</div><div class="hd" style="left:572px;width:80px;">BufferW</div><div class="hd" style="left:652px;width:80px;">hg</div><div class="hd" style="left:732px;width:80px;">hga</div><div class="hd" style="left:812px;width:80px;">hgs</div><div class="hd" style="left:892px;width:80px;">vg</div><div class="hd" style="left:972px;width:80px;">vgs</div><div class="hd" style="left:1052px;width:80px;">vgx</div><div class="hd" style="left:1132px;width:80px;">w</div><div class="hd" style="left:1212px;width:40px;"></div><svg class="ico" style="left:0px;top:19px" width="20" height="19" viewBox="0 0 20 19"><text x="4.6" y="14.7" font-family="Liberation Serif, serif" font-size="17" fill="#111">Σ</text><circle cx="13.9" cy="14.7" r="3.5" fill="#8ccb7a" opacity="0.5"/><circle cx="13.9" cy="14.7" r="2.8" fill="#7cc066"/><circle cx="13.9" cy="14.7" r="1" fill="#eaf7e3"/></svg><div class="c sel" style="left:18px;top:20px;width:134px;border-left:1px solid #dcdde0;border-right:2px solid #9ea2aa;padding-left:4px;">Volume (m³)</div><div class="c" style="left:152px;top:20px;width:100px;">121,250</div><div class="c sel" style="left:252px;top:20px;width:80px;">2,309</div><div class="c sel" style="left:332px;top:20px;width:80px;">1,000</div><div class="c sel" style="left:412px;top:20px;width:80px;">1,000</div><div class="c sel" style="left:492px;top:20px;width:80px;">1,000</div><div class="c sel" style="left:572px;top:20px;width:80px;">10,400</div><div class="c sel" style="left:652px;top:20px;width:80px;">6,065</div><div class="c sel" style="left:732px;top:20px;width:80px;">9,205</div><div class="c sel" style="left:812px;top:20px;width:80px;">8,412</div><div class="c sel" style="left:892px;top:20px;width:80px;">1,986</div><div class="c sel" style="left:972px;top:20px;width:80px;">7,110</div><div class="c sel" style="left:1052px;top:20px;width:80px;">7,816</div><div class="c sel" style="left:1132px;top:20px;width:80px;">64,947</div><svg class="ico" style="left:20px;top:38px" width="20" height="19" viewBox="0 0 20 19"><path d="M2.6 3.4H14" stroke="#111" stroke-width="1"/><text x="2.2" y="14.8" font-family="Liberation Serif, serif" font-style="italic" font-size="18" fill="#111" textLength="11.5" lengthAdjust="spacingAndGlyphs">x</text><circle cx="11.6" cy="14.6" r="3.5" fill="#8ccb7a" opacity="0.5"/><circle cx="11.6" cy="14.6" r="2.8" fill="#7cc066"/><circle cx="11.6" cy="14.6" r="1" fill="#eaf7e3"/></svg><div class="c" style="left:36px;top:39px;width:116px;border-left:1px solid #dcdde0;border-right:2px solid #9ea2aa;padding-left:4px;">Density</div><div class="c" style="left:152px;top:39px;width:100px;">2.75</div><div class="c" style="left:252px;top:39px;width:80px;">2.75</div><div class="c" style="left:332px;top:39px;width:80px;">2.75</div><div class="c" style="left:412px;top:39px;width:80px;">2.75</div><div class="c" style="left:492px;top:39px;width:80px;">2.75</div><div class="c" style="left:572px;top:39px;width:80px;">2.75</div><div class="c" style="left:652px;top:39px;width:80px;">2.75</div><div class="c" style="left:732px;top:39px;width:80px;">2.75</div><div class="c" style="left:812px;top:39px;width:80px;">2.75</div><div class="c" style="left:892px;top:39px;width:80px;">2.75</div><div class="c" style="left:972px;top:39px;width:80px;">2.75</div><div class="c" style="left:1052px;top:39px;width:80px;">2.75</div><div class="c" style="left:1132px;top:39px;width:80px;">2.75</div><svg class="ico" style="left:0px;top:57px" width="20" height="19" viewBox="0 0 20 19"><text x="4.6" y="14.7" font-family="Liberation Serif, serif" font-size="17" fill="#111">Σ</text><circle cx="13.9" cy="14.7" r="3.5" fill="#8ccb7a" opacity="0.5"/><circle cx="13.9" cy="14.7" r="2.8" fill="#7cc066"/><circle cx="13.9" cy="14.7" r="1" fill="#eaf7e3"/></svg><div class="c" style="left:18px;top:58px;width:134px;border-left:1px solid #dcdde0;border-right:2px solid #9ea2aa;padding-left:4px;">DryTonnes</div><div class="c" style="left:152px;top:58px;width:100px;">333,436</div><div class="c" style="left:252px;top:58px;width:80px;">6,351</div><div class="c" style="left:332px;top:58px;width:80px;">2,750</div><div class="c" style="left:412px;top:58px;width:80px;">2,750</div><div class="c" style="left:492px;top:58px;width:80px;">2,750</div><div class="c" style="left:572px;top:58px;width:80px;">28,600</div><div class="c" style="left:652px;top:58px;width:80px;">16,679</div><div class="c" style="left:732px;top:58px;width:80px;">25,313</div><div class="c" style="left:812px;top:58px;width:80px;">23,133</div><div class="c" style="left:892px;top:58px;width:80px;">5,461</div><div class="c" style="left:972px;top:58px;width:80px;">19,552</div><div class="c" style="left:1052px;top:58px;width:80px;">21,494</div><div class="c" style="left:1132px;top:58px;width:80px;">178,604</div><svg class="ico" style="left:20px;top:76px" width="20" height="19" viewBox="0 0 20 19"><path d="M2.6 3.4H14" stroke="#111" stroke-width="1"/><text x="2.2" y="14.8" font-family="Liberation Serif, serif" font-style="italic" font-size="18" fill="#111" textLength="11.5" lengthAdjust="spacingAndGlyphs">x</text><circle cx="11.6" cy="14.6" r="3.5" fill="#8ccb7a" opacity="0.5"/><circle cx="11.6" cy="14.6" r="2.8" fill="#7cc066"/><circle cx="11.6" cy="14.6" r="1" fill="#eaf7e3"/></svg><div class="c" style="left:36px;top:77px;width:116px;border-left:1px solid #dcdde0;border-right:2px solid #9ea2aa;padding-left:4px;">Fe</div><div class="c" style="left:152px;top:77px;width:100px;">47.33</div><div class="c" style="left:252px;top:77px;width:80px;">57.11</div><div class="c" style="left:332px;top:77px;width:80px;">57.72</div><div class="c" style="left:412px;top:77px;width:80px;">57.72</div><div class="c" style="left:492px;top:77px;width:80px;">55.12</div><div class="c" style="left:572px;top:77px;width:80px;">48.68</div><div class="c" style="left:652px;top:77px;width:80px;">63.26</div><div class="c" style="left:732px;top:77px;width:80px;">62.77</div><div class="c" style="left:812px;top:77px;width:80px;">62.65</div><div class="c" style="left:892px;top:77px;width:80px;">59.27</div><div class="c" style="left:972px;top:77px;width:80px;">62.29</div><div class="c" style="left:1052px;top:77px;width:80px;">62.58</div><div class="c" style="left:1132px;top:77px;width:80px;">36.82</div><svg class="ico" style="left:20px;top:95px" width="20" height="19" viewBox="0 0 20 19"><path d="M2.6 3.4H14" stroke="#111" stroke-width="1"/><text x="2.2" y="14.8" font-family="Liberation Serif, serif" font-style="italic" font-size="18" fill="#111" textLength="11.5" lengthAdjust="spacingAndGlyphs">x</text><circle cx="11.6" cy="14.6" r="3.5" fill="#8ccb7a" opacity="0.5"/><circle cx="11.6" cy="14.6" r="2.8" fill="#7cc066"/><circle cx="11.6" cy="14.6" r="1" fill="#eaf7e3"/></svg><div class="c" style="left:36px;top:96px;width:116px;border-left:1px solid #dcdde0;border-right:2px solid #9ea2aa;padding-left:4px;">Si</div><div class="c" style="left:152px;top:96px;width:100px;">4.10</div><div class="c" style="left:252px;top:96px;width:80px;">3.48</div><div class="c" style="left:332px;top:96px;width:80px;">3.00</div><div class="c" style="left:412px;top:96px;width:80px;">14.84</div><div class="c" style="left:492px;top:96px;width:80px;">16.35</div><div class="c" style="left:572px;top:96px;width:80px;">0.95</div><div class="c" style="left:652px;top:96px;width:80px;">3.58</div><div class="c" style="left:732px;top:96px;width:80px;">3.57</div><div class="c" style="left:812px;top:96px;width:80px;">15.41</div><div class="c" style="left:892px;top:96px;width:80px;">7.83</div><div class="c" style="left:972px;top:96px;width:80px;">16.75</div><div class="c" style="left:1052px;top:96px;width:80px;">16.11</div><div class="c" style="left:1132px;top:96px;width:80px;">0.00</div><svg class="ico" style="left:20px;top:114px" width="20" height="19" viewBox="0 0 20 19"><path d="M2.6 3.4H14" stroke="#111" stroke-width="1"/><text x="2.2" y="14.8" font-family="Liberation Serif, serif" font-style="italic" font-size="18" fill="#111" textLength="11.5" lengthAdjust="spacingAndGlyphs">x</text><circle cx="11.6" cy="14.6" r="3.5" fill="#8ccb7a" opacity="0.5"/><circle cx="11.6" cy="14.6" r="2.8" fill="#7cc066"/><circle cx="11.6" cy="14.6" r="1" fill="#eaf7e3"/></svg><div class="c" style="left:36px;top:115px;width:116px;border-left:1px solid #dcdde0;border-right:2px solid #9ea2aa;padding-left:4px;">Al</div><div class="c" style="left:152px;top:115px;width:100px;">1.79</div><div class="c" style="left:252px;top:115px;width:80px;">2.55</div><div class="c" style="left:332px;top:115px;width:80px;">6.36</div><div class="c" style="left:412px;top:115px;width:80px;">0.06</div><div class="c" style="left:492px;top:115px;width:80px;">6.46</div><div class="c" style="left:572px;top:115px;width:80px;">0.76</div><div class="c" style="left:652px;top:115px;width:80px;">1.71</div><div class="c" style="left:732px;top:115px;width:80px;">7.45</div><div class="c" style="left:812px;top:115px;width:80px;">1.78</div><div class="c" style="left:892px;top:115px;width:80px;">3.81</div><div class="c" style="left:972px;top:115px;width:80px;">4.23</div><div class="c" style="left:1052px;top:115px;width:80px;">7.48</div><div class="c" style="left:1132px;top:115px;width:80px;">0.00</div><svg class="ico" style="left:20px;top:133px" width="20" height="19" viewBox="0 0 20 19"><path d="M2.6 3.4H14" stroke="#111" stroke-width="1"/><text x="2.2" y="14.8" font-family="Liberation Serif, serif" font-style="italic" font-size="18" fill="#111" textLength="11.5" lengthAdjust="spacingAndGlyphs">x</text><circle cx="11.6" cy="14.6" r="3.5" fill="#8ccb7a" opacity="0.5"/><circle cx="11.6" cy="14.6" r="2.8" fill="#7cc066"/><circle cx="11.6" cy="14.6" r="1" fill="#eaf7e3"/></svg><div class="c" style="left:36px;top:134px;width:116px;border-left:1px solid #dcdde0;border-right:2px solid #9ea2aa;padding-left:4px;">lumpRec</div><div class="c" style="left:152px;top:134px;width:100px;">0.76</div><div class="c" style="left:252px;top:134px;width:80px;">0.76</div><div class="c" style="left:332px;top:134px;width:80px;">0.76</div><div class="c" style="left:412px;top:134px;width:80px;">0.76</div><div class="c" style="left:492px;top:134px;width:80px;">0.76</div><div class="c" style="left:572px;top:134px;width:80px;">0.76</div><div class="c" style="left:652px;top:134px;width:80px;">0.76</div><div class="c" style="left:732px;top:134px;width:80px;">0.76</div><div class="c" style="left:812px;top:134px;width:80px;">0.76</div><div class="c" style="left:892px;top:134px;width:80px;">0.76</div><div class="c" style="left:972px;top:134px;width:80px;">0.76</div><div class="c" style="left:1052px;top:134px;width:80px;">0.76</div><div class="c" style="left:1132px;top:134px;width:80px;">0.76</div><svg class="ico" style="left:20px;top:152px" width="20" height="19" viewBox="0 0 20 19"><path d="M2.6 3.4H14" stroke="#111" stroke-width="1"/><text x="2.2" y="14.8" font-family="Liberation Serif, serif" font-style="italic" font-size="18" fill="#111" textLength="11.5" lengthAdjust="spacingAndGlyphs">x</text><circle cx="11.6" cy="14.6" r="3.5" fill="#8ccb7a" opacity="0.5"/><circle cx="11.6" cy="14.6" r="2.8" fill="#7cc066"/><circle cx="11.6" cy="14.6" r="1" fill="#eaf7e3"/></svg><div class="c" style="left:36px;top:153px;width:116px;border-left:1px solid #dcdde0;border-right:2px solid #9ea2aa;padding-left:4px;">finesRec</div><div class="c" style="left:152px;top:153px;width:100px;">0.80</div><div class="c" style="left:252px;top:153px;width:80px;">0.80</div><div class="c" style="left:332px;top:153px;width:80px;">0.80</div><div class="c" style="left:412px;top:153px;width:80px;">0.80</div><div class="c" style="left:492px;top:153px;width:80px;">0.80</div><div class="c" style="left:572px;top:153px;width:80px;">0.80</div><div class="c" style="left:652px;top:153px;width:80px;">0.80</div><div class="c" style="left:732px;top:153px;width:80px;">0.80</div><div class="c" style="left:812px;top:153px;width:80px;">0.80</div><div class="c" style="left:892px;top:153px;width:80px;">0.80</div><div class="c" style="left:972px;top:153px;width:80px;">0.80</div><div class="c" style="left:1052px;top:153px;width:80px;">0.80</div><div class="c" style="left:1132px;top:153px;width:80px;">0.80</div><svg class="ico" style="left:0px;top:171px" width="20" height="19" viewBox="0 0 20 19"><text x="4.6" y="14.7" font-family="Liberation Serif, serif" font-size="17" fill="#111">Σ</text><circle cx="13.9" cy="14.7" r="3.5" fill="#8ccb7a" opacity="0.5"/><circle cx="13.9" cy="14.7" r="2.8" fill="#7cc066"/><circle cx="13.9" cy="14.7" r="1" fill="#eaf7e3"/></svg><div class="c" style="left:18px;top:172px;width:134px;border-left:1px solid #dcdde0;border-right:2px solid #9ea2aa;padding-left:4px;">WetTonnes</div><div class="c" style="left:152px;top:172px;width:100px;">350,985</div><div class="c" style="left:252px;top:172px;width:80px;">6,685</div><div class="c" style="left:332px;top:172px;width:80px;">2,895</div><div class="c" style="left:412px;top:172px;width:80px;">2,895</div><div class="c" style="left:492px;top:172px;width:80px;">2,895</div><div class="c" style="left:572px;top:172px;width:80px;">30,105</div><div class="c" style="left:652px;top:172px;width:80px;">17,556</div><div class="c" style="left:732px;top:172px;width:80px;">26,645</div><div class="c" style="left:812px;top:172px;width:80px;">24,351</div><div class="c" style="left:892px;top:172px;width:80px;">5,749</div><div class="c" style="left:972px;top:172px;width:80px;">20,581</div><div class="c" style="left:1052px;top:172px;width:80px;">22,625</div><div class="c" style="left:1132px;top:172px;width:80px;">188,004</div><svg class="ico" style="left:20px;top:190px" width="20" height="19" viewBox="0 0 20 19"><path d="M2.6 3.4H14" stroke="#111" stroke-width="1"/><text x="2.2" y="14.8" font-family="Liberation Serif, serif" font-style="italic" font-size="18" fill="#111" textLength="11.5" lengthAdjust="spacingAndGlyphs">x</text><circle cx="11.6" cy="14.6" r="3.5" fill="#8ccb7a" opacity="0.5"/><circle cx="11.6" cy="14.6" r="2.8" fill="#7cc066"/><circle cx="11.6" cy="14.6" r="1" fill="#eaf7e3"/></svg><div class="c" style="left:36px;top:191px;width:116px;border-left:1px solid #dcdde0;border-right:2px solid #9ea2aa;padding-left:4px;">Moisture</div><div class="c" style="left:152px;top:191px;width:100px;">0.05</div><div class="c" style="left:252px;top:191px;width:80px;">0.05</div><div class="c" style="left:332px;top:191px;width:80px;">0.05</div><div class="c" style="left:412px;top:191px;width:80px;">0.05</div><div class="c" style="left:492px;top:191px;width:80px;">0.05</div><div class="c" style="left:572px;top:191px;width:80px;">0.05</div><div class="c" style="left:652px;top:191px;width:80px;">0.05</div><div class="c" style="left:732px;top:191px;width:80px;">0.05</div><div class="c" style="left:812px;top:191px;width:80px;">0.05</div><div class="c" style="left:892px;top:191px;width:80px;">0.05</div><div class="c" style="left:972px;top:191px;width:80px;">0.05</div><div class="c" style="left:1052px;top:191px;width:80px;">0.05</div><div class="c" style="left:1132px;top:191px;width:80px;">0.05</div><svg class="ico" style="left:0px;top:209px" width="20" height="19" viewBox="0 0 20 19"><text x="4.6" y="14.7" font-family="Liberation Serif, serif" font-size="17" fill="#111">Σ</text><circle cx="13.9" cy="14.7" r="3.5" fill="#8ccb7a" opacity="0.5"/><circle cx="13.9" cy="14.7" r="2.8" fill="#7cc066"/><circle cx="13.9" cy="14.7" r="1" fill="#eaf7e3"/></svg><div class="c" style="left:18px;top:210px;width:134px;border-left:1px solid #dcdde0;border-right:2px solid #9ea2aa;padding-left:4px;letter-spacing:-0.3px;">DryPlant_Rail_Lump_V...</div><div class="c" style="left:152px;top:210px;width:100px;">66,687</div><div class="c" style="left:252px;top:210px;width:80px;">1,270</div><div class="c" style="left:332px;top:210px;width:80px;">550</div><div class="c" style="left:412px;top:210px;width:80px;">550</div><div class="c" style="left:492px;top:210px;width:80px;">550</div><div class="c" style="left:572px;top:210px;width:80px;">5,720</div><div class="c" style="left:652px;top:210px;width:80px;">3,336</div><div class="c" style="left:732px;top:210px;width:80px;">5,063</div><div class="c" style="left:812px;top:210px;width:80px;">4,627</div><div class="c" style="left:892px;top:210px;width:80px;">1,092</div><div class="c" style="left:972px;top:210px;width:80px;">3,910</div><div class="c" style="left:1052px;top:210px;width:80px;">4,299</div><div class="c" style="left:1132px;top:210px;width:80px;">35,721</div><svg class="ico" style="left:0px;top:228px" width="20" height="19" viewBox="0 0 20 19"><text x="4.6" y="14.7" font-family="Liberation Serif, serif" font-size="17" fill="#111">Σ</text><circle cx="13.9" cy="14.7" r="3.5" fill="#8ccb7a" opacity="0.5"/><circle cx="13.9" cy="14.7" r="2.8" fill="#7cc066"/><circle cx="13.9" cy="14.7" r="1" fill="#eaf7e3"/></svg><div class="c" style="left:18px;top:229px;width:134px;border-left:1px solid #dcdde0;border-right:2px solid #9ea2aa;padding-left:4px;letter-spacing:-0.3px;">DryPlant_Rail_Lump_W...</div><div class="c" style="left:152px;top:229px;width:100px;">193,042</div><div class="c" style="left:252px;top:229px;width:80px;">3,677</div><div class="c" style="left:332px;top:229px;width:80px;">1,592</div><div class="c" style="left:412px;top:229px;width:80px;">1,592</div><div class="c" style="left:492px;top:229px;width:80px;">1,592</div><div class="c" style="left:572px;top:229px;width:80px;">16,558</div><div class="c" style="left:652px;top:229px;width:80px;">9,656</div><div class="c" style="left:732px;top:229px;width:80px;">14,655</div><div class="c" style="left:812px;top:229px;width:80px;">13,393</div><div class="c" style="left:892px;top:229px;width:80px;">3,162</div><div class="c" style="left:972px;top:229px;width:80px;">11,319</div><div class="c" style="left:1052px;top:229px;width:80px;">12,444</div><div class="c" style="left:1132px;top:229px;width:80px;">103,402</div><svg class="ico" style="left:0px;top:247px" width="20" height="19" viewBox="0 0 20 19"><text x="4.6" y="14.7" font-family="Liberation Serif, serif" font-size="17" fill="#111">Σ</text><circle cx="13.9" cy="14.7" r="3.5" fill="#8ccb7a" opacity="0.5"/><circle cx="13.9" cy="14.7" r="2.8" fill="#7cc066"/><circle cx="13.9" cy="14.7" r="1" fill="#eaf7e3"/></svg><div class="c" style="left:18px;top:248px;width:134px;border-left:1px solid #dcdde0;border-right:2px solid #9ea2aa;padding-left:4px;letter-spacing:-0.3px;">DryPlant_Rail_Lump_Dr...</div><div class="c" style="left:152px;top:248px;width:100px;">183,390</div><div class="c" style="left:252px;top:248px;width:80px;">3,493</div><div class="c" style="left:332px;top:248px;width:80px;">1,513</div><div class="c" style="left:412px;top:248px;width:80px;">1,513</div><div class="c" style="left:492px;top:248px;width:80px;">1,513</div><div class="c" style="left:572px;top:248px;width:80px;">15,730</div><div class="c" style="left:652px;top:248px;width:80px;">9,173</div><div class="c" style="left:732px;top:248px;width:80px;">13,922</div><div class="c" style="left:812px;top:248px;width:80px;">12,723</div><div class="c" style="left:892px;top:248px;width:80px;">3,004</div><div class="c" style="left:972px;top:248px;width:80px;">10,753</div><div class="c" style="left:1052px;top:248px;width:80px;">11,822</div><div class="c" style="left:1132px;top:248px;width:80px;">98,232</div><svg class="ico" style="left:20px;top:266px" width="20" height="19" viewBox="0 0 20 19"><path d="M2.6 3.4H14" stroke="#111" stroke-width="1"/><text x="2.2" y="14.8" font-family="Liberation Serif, serif" font-style="italic" font-size="18" fill="#111" textLength="11.5" lengthAdjust="spacingAndGlyphs">x</text><circle cx="11.6" cy="14.6" r="3.5" fill="#8ccb7a" opacity="0.5"/><circle cx="11.6" cy="14.6" r="2.8" fill="#7cc066"/><circle cx="11.6" cy="14.6" r="1" fill="#eaf7e3"/></svg><div class="c" style="left:36px;top:267px;width:116px;border-left:1px solid #dcdde0;border-right:2px solid #9ea2aa;padding-left:4px;">Fe</div><div class="c" style="left:152px;top:267px;width:100px;">48.98</div><div class="c" style="left:252px;top:267px;width:80px;">59.11</div><div class="c" style="left:332px;top:267px;width:80px;">59.74</div><div class="c" style="left:412px;top:267px;width:80px;">59.74</div><div class="c" style="left:492px;top:267px;width:80px;">57.05</div><div class="c" style="left:572px;top:267px;width:80px;">50.38</div><div class="c" style="left:652px;top:267px;width:80px;">65.48</div><div class="c" style="left:732px;top:267px;width:80px;">64.96</div><div class="c" style="left:812px;top:267px;width:80px;">64.84</div><div class="c" style="left:892px;top:267px;width:80px;">61.34</div><div class="c" style="left:972px;top:267px;width:80px;">64.47</div><div class="c" style="left:1052px;top:267px;width:80px;">64.77</div><div class="c" style="left:1132px;top:267px;width:80px;">38.11</div><svg class="ico" style="left:20px;top:285px" width="20" height="19" viewBox="0 0 20 19"><path d="M2.6 3.4H14" stroke="#111" stroke-width="1"/><text x="2.2" y="14.8" font-family="Liberation Serif, serif" font-style="italic" font-size="18" fill="#111" textLength="11.5" lengthAdjust="spacingAndGlyphs">x</text><circle cx="11.6" cy="14.6" r="3.5" fill="#8ccb7a" opacity="0.5"/><circle cx="11.6" cy="14.6" r="2.8" fill="#7cc066"/><circle cx="11.6" cy="14.6" r="1" fill="#eaf7e3"/></svg><div class="c" style="left:36px;top:286px;width:116px;border-left:1px solid #dcdde0;border-right:2px solid #9ea2aa;padding-left:4px;">Si</div><div class="c" style="left:152px;top:286px;width:100px;">3.07</div><div class="c" style="left:252px;top:286px;width:80px;">2.61</div><div class="c" style="left:332px;top:286px;width:80px;">2.25</div><div class="c" style="left:412px;top:286px;width:80px;">11.13</div><div class="c" style="left:492px;top:286px;width:80px;">12.26</div><div class="c" style="left:572px;top:286px;width:80px;">0.72</div><div class="c" style="left:652px;top:286px;width:80px;">2.69</div><div class="c" style="left:732px;top:286px;width:80px;">2.68</div><div class="c" style="left:812px;top:286px;width:80px;">11.56</div><div class="c" style="left:892px;top:286px;width:80px;">5.88</div><div class="c" style="left:972px;top:286px;width:80px;">12.56</div><div class="c" style="left:1052px;top:286px;width:80px;">12.08</div><div class="c" style="left:1132px;top:286px;width:80px;">0.00</div><svg class="ico" style="left:20px;top:304px" width="20" height="19" viewBox="0 0 20 19"><path d="M2.6 3.4H14" stroke="#111" stroke-width="1"/><text x="2.2" y="14.8" font-family="Liberation Serif, serif" font-style="italic" font-size="18" fill="#111" textLength="11.5" lengthAdjust="spacingAndGlyphs">x</text><circle cx="11.6" cy="14.6" r="3.5" fill="#8ccb7a" opacity="0.5"/><circle cx="11.6" cy="14.6" r="2.8" fill="#7cc066"/><circle cx="11.6" cy="14.6" r="1" fill="#eaf7e3"/></svg><div class="c" style="left:36px;top:305px;width:116px;border-left:1px solid #dcdde0;border-right:2px solid #9ea2aa;padding-left:4px;">Al</div><div class="c" style="left:152px;top:305px;width:100px;">1.09</div><div class="c" style="left:252px;top:305px;width:80px;">1.56</div><div class="c" style="left:332px;top:305px;width:80px;">3.88</div><div class="c" style="left:412px;top:305px;width:80px;">0.04</div><div class="c" style="left:492px;top:305px;width:80px;">3.94</div><div class="c" style="left:572px;top:305px;width:80px;">0.46</div><div class="c" style="left:652px;top:305px;width:80px;">1.04</div><div class="c" style="left:732px;top:305px;width:80px;">4.55</div><div class="c" style="left:812px;top:305px;width:80px;">1.09</div><div class="c" style="left:892px;top:305px;width:80px;">2.32</div><div class="c" style="left:972px;top:305px;width:80px;">2.58</div><div class="c" style="left:1052px;top:305px;width:80px;">4.56</div><div class="c" style="left:1132px;top:305px;width:80px;">0.00</div><svg class="ico" style="left:0px;top:323px" width="20" height="19" viewBox="0 0 20 19"><text x="4.6" y="14.7" font-family="Liberation Serif, serif" font-size="17" fill="#111">Σ</text><circle cx="13.9" cy="14.7" r="3.5" fill="#8ccb7a" opacity="0.5"/><circle cx="13.9" cy="14.7" r="2.8" fill="#7cc066"/><circle cx="13.9" cy="14.7" r="1" fill="#eaf7e3"/></svg><div class="c" style="left:18px;top:324px;width:134px;border-left:1px solid #dcdde0;border-right:2px solid #9ea2aa;padding-left:4px;letter-spacing:-0.3px;">DryPlant_Rail_Fines_V...</div><div class="c" style="left:152px;top:324px;width:100px;">54,563</div><div class="c" style="left:252px;top:324px;width:80px;">1,039</div><div class="c" style="left:332px;top:324px;width:80px;">450</div><div class="c" style="left:412px;top:324px;width:80px;">450</div><div class="c" style="left:492px;top:324px;width:80px;">450</div><div class="c" style="left:572px;top:324px;width:80px;">4,680</div><div class="c" style="left:652px;top:324px;width:80px;">2,729</div><div class="c" style="left:732px;top:324px;width:80px;">4,142</div><div class="c" style="left:812px;top:324px;width:80px;">3,785</div><div class="c" style="left:892px;top:324px;width:80px;">894</div><div class="c" style="left:972px;top:324px;width:80px;">3,199</div><div class="c" style="left:1052px;top:324px;width:80px;">3,517</div><div class="c" style="left:1132px;top:324px;width:80px;">29,226</div></div>
<div class="btn" style="left:12px;top:965px;width:76px;height:43px;"><svg class="ico" style="left:24px;top:3px" width="22" height="18" viewBox="0 0 22 18"><path d="M2 9C5 4.5 15 4.5 19 9C15 13.5 5 13.5 2 9Z" fill="none" stroke="#777" stroke-width="1.2"/><circle cx="10.5" cy="9" r="2.6" fill="none" stroke="#777" stroke-width="1.2"/><path d="M4 15.5L18 2.5" stroke="#d03030" stroke-width="1.6"/></svg><div class="abs" style="left:0;width:74px;top:24px;text-align:center;color:#333">Min/Max</div></div>
<div class="btn" style="left:102px;top:965px;width:112px;height:43px;"><svg class="ico" style="left:3px;top:4px" width="36" height="34" viewBox="0 0 36 34"><path d="M9 1.5H21L27 7.5V27.5H9Z" fill="#fdfdfe" stroke="#8aa0c0" stroke-width="1"/><path d="M21 1.5V7.5H27" fill="#e4ebf5" stroke="#8aa0c0" stroke-width="1"/><rect x="1" y="5" width="14" height="8.5" fill="#2f9a2f"/><text x="8" y="12" font-family="Liberation Sans, sans-serif" font-size="7" font-weight="bold" fill="#fff" text-anchor="middle">XLS</text><rect x="17" y="18" width="14" height="14" rx="1" fill="#3a4a6a" stroke="#1e2a44" stroke-width="1"/><rect x="20" y="19" width="8" height="5" fill="#e8ecf4"/><rect x="20" y="27" width="8" height="5" fill="#6fb4e8"/></svg><div class="abs" style="left:49px;top:15px;color:#333">Export</div><div class="abs" style="left:98px;top:19px;width:0;height:0;border-left:3.5px solid transparent;border-right:3.5px solid transparent;border-top:4px solid #666"></div></div>
<div class="abs" style="left:227px;top:969px;color:#222">Parcels</div><div class="inp" style="left:267px;top:964px;width:990px;padding-top:4px;">&lt;All Parcels&gt;</div>
<div class="abs" style="left:228px;top:993px;color:#222">Fields</div><div class="inp" style="left:260px;top:988px;width:990px;padding-top:4px;">&lt;All Fields&gt;</div>
<div class="abs" style="left:5px;top:1012px;width:1240px;height:32px;background:linear-gradient(#dfe2e8,#d3d7de);border:1px solid #a4a8b0;border-top:none;box-sizing:border-box;"></div>
<div class="abs" style="left:3px;top:1044px;width:1240px;height:3px;background:#c5c9d0;border-top:1px solid #8f939b"></div>
<div class="tab" style="left:19px;">Properties</div>
<div class="abs" style="left:82px;top:1012px;width:68px;height:25px;background:#e9ecf1;border:1px solid #9a9ea6;border-top:none;box-sizing:border-box;"></div>
<div class="tab" style="left:91px;">Reserves</div>
<div class="tab" style="left:158px;">Error List</div>
<div class="abs" style="left:572.5px;top:601px;width:106px;height:384.5px;border:6px solid #e81c24;background:rgba(255,90,90,0.10);box-sizing:border-box;"></div>
<div class="abs" style="left:65.5px;top:1008px;width:96.5px;height:41px;border:6px solid #e81c24;background:rgba(255,90,90,0.10);box-sizing:border-box;"></div>
<div id="bottomdark"></div>
<div id="topline"></div><div id="topline2"></div><div id="leftedge"></div><div id="leftedge2"></div>

</div>
</body></html>
